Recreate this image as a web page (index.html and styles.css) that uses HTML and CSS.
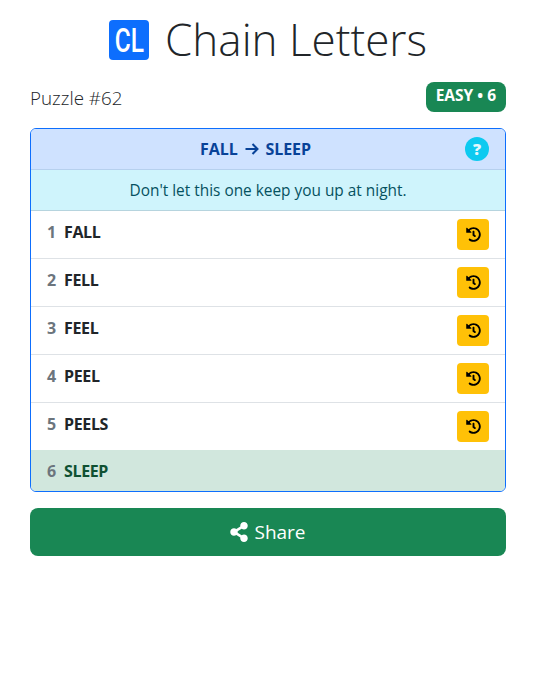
FILE: index.html
```html
<!DOCTYPE html>
<html lang="en">
    <head>
        <meta charset="UTF-8">
        <meta name="viewport" content="width=device-width, initial-scale=1.0">
        <title>Chain Letters</title>
        <link rel="stylesheet" href="styles.css">
    </head>
    <body>
        <div class="pagina">
            <h1 class="titulo">
                <span class="logo"><span class="logo-texto">CL</span></span>
                <span class="nome">Chain Letters</span>
            </h1>
            <div class="info">
                <span class="puzzle">Puzzle #62</span>
                <span class="nivel">EASY • 6</span>
            </div>

            <div class="cartao">
                <div class="cabecalho">
                    <span class="meta">FALL
                        <svg class="seta" viewBox="0 0 16 16"><path d="M1.5 8h12M8.5 3l5 5-5 5"/></svg>
                        SLEEP</span>
                    <span class="ajuda">?</span>
                </div>
                <div class="dica">Don't let this one keep you up at night.</div>

                <div class="linha"><span class="num">1</span><span class="palavra">FALL</span>
                    <button class="voltar"><svg viewBox="0 0 512 512"><use href="#historia"/></svg></button></div>
                <div class="linha"><span class="num">2</span><span class="palavra">FELL</span>
                    <button class="voltar"><svg viewBox="0 0 512 512"><use href="#historia"/></svg></button></div>
                <div class="linha"><span class="num">3</span><span class="palavra">FEEL</span>
                    <button class="voltar"><svg viewBox="0 0 512 512"><use href="#historia"/></svg></button></div>
                <div class="linha"><span class="num">4</span><span class="palavra">PEEL</span>
                    <button class="voltar"><svg viewBox="0 0 512 512"><use href="#historia"/></svg></button></div>
                <div class="linha ultima-editavel"><span class="num">5</span><span class="palavra">PEELS</span>
                    <button class="voltar"><svg viewBox="0 0 512 512"><use href="#historia"/></svg></button></div>
                <div class="linha final"><span class="num">6</span><span class="palavra">SLEEP</span></div>
            </div>

            <button class="compartilhar">
                <svg viewBox="0 0 448 512"><path d="M352 320c-22.608 0-43.387 7.819-59.79 20.895l-102.486-64.054a96.551 96.551 0 0 0 0-41.683l102.486-64.054C308.613 184.181 329.392 192 352 192c53.019 0 96-42.981 96-96S405.019 0 352 0s-96 42.981-96 96c0 7.158.79 14.13 2.276 20.841L155.79 180.895C139.387 167.819 118.608 160 96 160c-53.019 0-96 42.981-96 96s42.981 96 96 96c22.608 0 43.387-7.819 59.79-20.895l102.486 64.054A96.301 96.301 0 0 0 256 416c0 53.019 42.981 96 96 96s96-42.981 96-96-42.981-96-96-96z"/></svg>
                Share
            </button>
        </div>

        <svg class="oculto">
            <symbol id="historia" viewBox="0 0 512 512">
                <path d="M504 255.531c.253 136.64-111.18 248.372-247.82 248.468-59.015.042-113.223-20.53-155.822-54.911-11.077-8.94-11.905-25.541-1.839-35.607l11.267-11.267c8.609-8.609 22.353-9.551 31.891-1.984C173.062 425.135 212.781 440 256 440c101.705 0 184-82.311 184-184 0-101.705-82.311-184-184-184-48.814 0-93.149 18.969-126.068 49.932l50.754 50.754c10.08 10.08 2.941 27.314-11.313 27.314H24c-8.837 0-16-7.163-16-16V38.627c0-14.254 17.234-21.393 27.314-11.314l49.372 49.372C129.209 31.084 189.552 8 256 8c136.81 0 247.747 110.78 248 247.531zm-180.912 78.784l9.823-12.63c8.138-10.463 6.253-25.542-4.21-33.679L288 256.349V152c0-13.255-10.745-24-24-24h-16c-13.255 0-24 10.745-24 24v135.651l65.409 50.874c10.463 8.137 25.541 6.253 33.679-4.21z"/>
            </symbol>
        </svg>
    </body>
</html>
```

FILE: styles.css
```css
*{
    margin: 0;
    padding: 0;
    box-sizing: border-box;
}
body{
    background-color: white;
    font-family: "Open Sans", "Noto Sans", sans-serif;
    color: #212529;
}
.pagina{
    padding: 0 40px 0 30px;
}
.titulo{
    display: flex;
    align-items: center;
    justify-content: center;
    gap: 16px;
    height: 80px;
    margin-bottom: 2px;
    font-size: 44px;
    font-weight: 300;
}
.nome{
    position: relative;
    top: -1px;
}
.logo{
    display: flex;
    align-items: center;
    justify-content: center;
    width: 40px;
    height: 40px;
    background-color: #0d6efd;
    border-radius: 4px;
}
.logo-texto{
    transform: scaleX(0.72);
    font-family: "Roboto", sans-serif;
    font-size: 34px;
    font-weight: 500;
    line-height: 40px;
    color: white;
}
.info{
    display: flex;
    justify-content: space-between;
    align-items: center;
    height: 30px;
    margin-bottom: 16px;
}
.puzzle{
    font-size: 18.8px;
    font-weight: 300;
    padding-top: 2px;
}
.nivel{
    background-color: #198754;
    color: white;
    border-radius: 8px;
    padding: 0 10px;
    height: 30px;
    line-height: 26px;
    font-size: 15.5px;
    font-weight: 700;
}
.cartao{
    border: 1px solid #0d6efd;
    border-radius: 6px;
    overflow: hidden;
}
.cabecalho{
    display: flex;
    align-items: center;
    justify-content: center;
    position: relative;
    height: 41px;
    background-color: #cfe2ff;
    border-bottom: 1px solid #b6d0ee;
    color: #084298;
    font-size: 16px;
    font-weight: 700;
    letter-spacing: -0.1px;
}
.meta{
    display: flex;
    align-items: center;
    gap: 6px;
    margin-right: 25px;
}
.seta{
    width: 16px;
    height: 16px;
    fill: none;
    stroke: #084298;
    stroke-width: 2;
}
.ajuda{
    position: absolute;
    right: 16px;
    top: 8px;
    width: 24px;
    height: 24px;
    border-radius: 50%;
    background-color: #0dcaf0;
    color: #e4f8fd;
    text-align: center;
    line-height: 24px;
    font-size: 16px;
    font-weight: 800;
}
.dica{
    height: 41px;
    line-height: 41px;
    text-align: center;
    background-color: #cff4fc;
    border-bottom: 1px solid #b6d4de;
    color: #055160;
    font-size: 15.4px;
}
.linha{
    display: flex;
    align-items: center;
    height: 48px;
    padding: 0 16px;
    border-bottom: 1px solid #dee2e6;
    font-size: 16px;
    font-weight: 700;
    letter-spacing: -0.35px;
}
.ultima-editavel{
    height: 47px;
    border-bottom: none;
}
.num{
    width: 17px;
    color: #6c757d;
    position: relative;
    top: -3px;
}
.palavra{
    flex: 1;
    position: relative;
    top: -3px;
}
.voltar{
    display: flex;
    align-items: center;
    justify-content: center;
    width: 32px;
    height: 31px;
    background-color: #ffc107;
    border: none;
    border-radius: 4px;
    color: black;
}
.voltar svg{
    width: 15px;
    height: 15px;
    fill: currentColor;
}
.final{
    height: 41px;
    background-color: #d1e7dd;
    color: #0f5132;
    border-bottom: none;
}
.final .num, .final .palavra{
    top: 0;
}
.compartilhar{
    display: flex;
    align-items: center;
    justify-content: center;
    gap: 6px;
    width: 100%;
    height: 48px;
    margin-top: 16px;
    background-color: #198754;
    color: white;
    border: none;
    border-radius: 8px;
    font-family: inherit;
    font-size: 19px;
}
.compartilhar svg{
    width: 18px;
    height: 20px;
    fill: currentColor;
}
.oculto{
    display: none;
}
```
